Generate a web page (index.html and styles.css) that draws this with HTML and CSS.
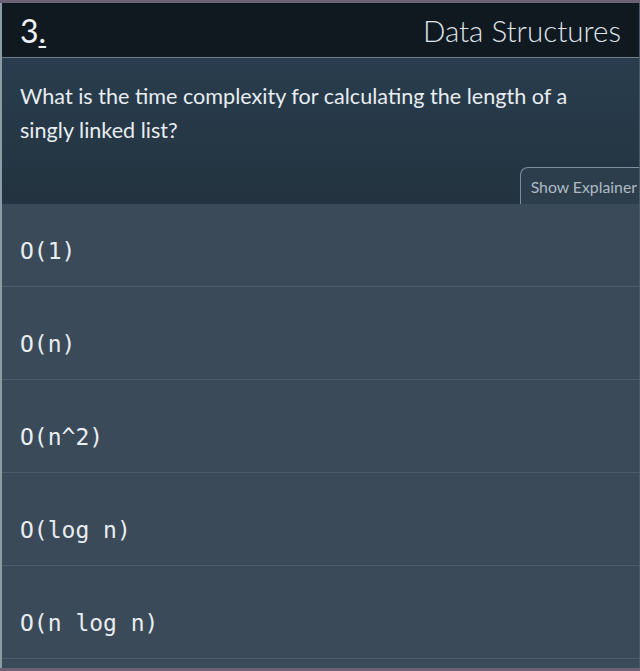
FILE: index.html
```html
<!DOCTYPE html>
<html lang="en">
<head>
    <meta charset="UTF-8">
    <meta name="viewport" content="width=device-width, initial-scale=1.0">
    <title>Quiz - Data Structures</title>
    <link rel="stylesheet" href="styles.css">
</head>
<body>
    <div class="quiz-card">
        <div class="quiz-header">
            <span class="question-number">3<span class="num-dot">.</span></span>
            <span class="category">Data Structures</span>
        </div>

        <div class="question-section">
            <p class="question-text">What is the time complexity for calculating the length of a singly linked list?</p>
            <div class="explainer-row">
                <button class="explainer-button">Show Explainer</button>
            </div>
        </div>

        <ul class="answer-list">
            <li class="answer-item">O(1)</li>
            <li class="answer-item">O(n)</li>
            <li class="answer-item">O(n^2)</li>
            <li class="answer-item">O(log n)</li>
            <li class="answer-item">O(n log n)</li>
        </ul>
    </div>
</body>
</html>
```

FILE: styles.css
```css
:root {
    --bg-frame: #6c6276;
    --bg-header: #101820;
    --bg-question-top: #293d4e;
    --bg-question-bottom: #23333f;
    --bg-answer: #3a4a58;
    --line-answer: #4c5d6a;
    --edge: #8c9ba6;
    --text-primary: #e8edf1;
    --text-secondary: #aebac4;
}

* {
    box-sizing: border-box;
}

body {
    margin: 0;
    padding: 3px 0 2px;
    background-color: var(--bg-frame);
    font-family: 'Lato', 'Open Sans', Arial, sans-serif;
    color: var(--text-primary);
}

.quiz-card {
    width: 640px;
    border-left: 2px solid var(--edge);
    border-right: 1px solid #4a5a66;
    background-color: var(--bg-answer);
}

.quiz-header {
    display: flex;
    justify-content: space-between;
    align-items: center;
    height: 55px;
    padding: 0 18px 0 18px;
    background-color: var(--bg-header);
    border-bottom: 1px solid #6f808c;
}

.question-number {
    font-size: 32px;
    font-weight: 400;
    color: #eef2f5;
}

.num-dot {
    text-decoration: underline;
    text-decoration-thickness: 2px;
    text-underline-offset: 3px;
}

.category {
    font-size: 29.5px;
    font-weight: 300;
    color: #dfe4e8;
}

.question-section {
    background: linear-gradient(180deg, var(--bg-question-top), var(--bg-question-bottom));
    padding-top: 21px;
}

.question-text {
    margin: 0;
    padding: 0 40px 0 18px;
    font-size: 21.6px;
    line-height: 34px;
    color: var(--text-primary);
}

.explainer-row {
    display: flex;
    justify-content: flex-end;
    margin-top: 20px;
}

.explainer-button {
    height: 37px;
    padding: 0 2px 0 10px;
    font-family: 'Lato', 'Open Sans', Arial, sans-serif;
    font-size: 15.8px;
    color: var(--text-secondary);
    background-color: #2c3e4c;
    border: 1px solid #7d8f9c;
    border-bottom: none;
    border-right: none;
    border-radius: 8px 0 0 0;
}

.answer-list {
    list-style: none;
    margin: 0;
    padding: 0 0 9px;
}

.answer-item {
    padding: 44px 18px 22px;
    font-family: 'DejaVu Sans Mono', 'Liberation Mono', monospace;
    font-size: 23px;
    line-height: 26px;
    color: var(--text-primary);
    border-bottom: 1px solid var(--line-answer);
}

.answer-item:first-child {
    padding-top: 34px;
}
```
